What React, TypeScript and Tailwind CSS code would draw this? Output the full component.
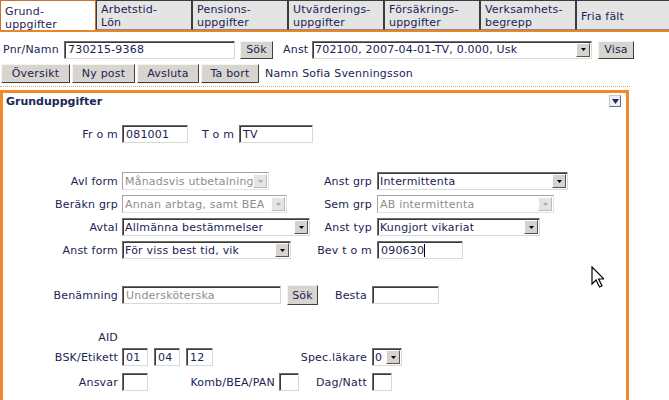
import React from 'react'

const tabs: string[][] = [
  ['Grund-', 'uppgifter'],
  ['Arbetstid-', 'Lön'],
  ['Pensions-', 'uppgifter'],
  ['Utvärderings-', 'uppgifter'],
  ['Försäkrings-', 'uppgifter'],
  ['Verksamhets-', 'begrepp'],
  ['Fria fält'],
]

function Field({ w, value = '', muted, caret }: { w: string; value?: string; muted?: boolean; caret?: boolean }) {
  return (
    <div
      className={`${w} h-[18px] shrink-0 flex items-center pl-[3px] bg-white border border-t-[#6e6e6e] border-l-[#6e6e6e] border-r-[#d8d8d8] border-b-[#d8d8d8] shadow-[inset_1px_1px_0_#3a3a3a] whitespace-nowrap overflow-hidden ${
        muted ? 'text-[#8e8e8e]' : 'text-[#1b2353]'
      }`}
    >
      {value}
      {caret && <span className="w-px h-[13px] bg-black" />}
    </div>
  )
}

function Select({ w, value, disabled }: { w: string; value: string; disabled?: boolean }) {
  return (
    <div
      className={`${w} h-[18px] shrink-0 flex items-center justify-between pl-[2px] bg-white border whitespace-nowrap overflow-hidden ${
        disabled
          ? 'border-t-[#a4a4a4] border-l-[#a4a4a4] border-r-[#e2e2e2] border-b-[#e2e2e2] text-[#8e8e8e]'
          : 'border-t-[#6e6e6e] border-l-[#6e6e6e] border-r-[#d8d8d8] border-b-[#d8d8d8] shadow-[inset_1px_1px_0_#3a3a3a] text-[#1b2353]'
      }`}
    >
      <span className="overflow-hidden">{value}</span>
      <span
        className={`w-[14px] h-[14px] mr-px shrink-0 flex items-center justify-center border border-t-white border-l-white ${
          disabled ? 'bg-[#e4e4e4] border-r-[#bcbcbc] border-b-[#bcbcbc]' : 'bg-[#d6d3ce] border-r-[#555555] border-b-[#555555]'
        }`}
      >
        <svg width="5" height="3" viewBox="0 0 5 3">
          <path d="M0 0h5L2.5 3z" fill={disabled ? '#a8a8a8' : '#000000'} />
        </svg>
      </span>
    </div>
  )
}

function Btn({ w, h = 'h-[18px]', children }: { w: string; h?: string; children: React.ReactNode }) {
  return (
    <div
      className={`${w} ${h} shrink-0 flex items-center justify-center bg-[#d8d5cf] border border-t-[#f4f4f4] border-l-[#f4f4f4] border-r-[#404040] border-b-[#404040] whitespace-nowrap`}
    >
      {children}
    </div>
  )
}

function Label({ children }: { children: React.ReactNode }) {
  return <div className="w-[115px] shrink-0 text-right whitespace-nowrap">{children}</div>
}

export default function App() {
  return (
    <div className="relative w-[669px] h-[400px] overflow-hidden bg-white flex flex-col text-[11px] leading-[13px] tracking-[0.2px] text-[#1b2353] font-['DejaVu_Sans','Verdana',sans-serif]">
      {/* Tabs */}
      <div className="flex shrink-0 overflow-hidden">
        {tabs.map((t, i) => (
          <div
            key={t[0]}
            className={`w-[96px] h-[30px] shrink-0 border pl-[4px] whitespace-nowrap ${
              i === 0
                ? 'bg-white border-[#c27436] border-b-0 pt-[4px]'
                : 'bg-[#e4e4e4] border-[#3c3c3c] border-b-[#8a8a8a] pt-[2px]'
            } ${t.length === 1 ? 'flex items-center pt-0' : ''}`}
          >
            {t.map((line) => (
              <div key={line}>{line}</div>
            ))}
          </div>
        ))}
      </div>
      <div className="h-[2px] shrink-0 bg-[#e9862c]" />

      {/* Search row */}
      <div className="flex items-center h-[17px] mt-[9px] pl-[3px] shrink-0">
        <div className="w-[61px] shrink-0">Pnr/Namn</div>
        <Field w="w-[171px]" value="730215-9368" />
        <div className="ml-[5px]">
          <Btn w="w-[33px]">Sök</Btn>
        </div>
        <div className="w-[29px] ml-[10px] shrink-0">Anst</div>
        <Select w="w-[280px]" value="702100, 2007-04-01-TV, 0.000, Usk" />
        <div className="ml-[6px]">
          <Btn w="w-[36px]">Visa</Btn>
        </div>
      </div>

      {/* Action buttons */}
      <div className="flex items-center gap-[2px] h-[19px] mt-[6px] pl-[1px] shrink-0">
        <Btn w="w-[69px]" h="h-[19px]">Översikt</Btn>
        <Btn w="w-[63px]" h="h-[19px]">Ny post</Btn>
        <Btn w="w-[62px]" h="h-[19px]">Avsluta</Btn>
        <Btn w="w-[58px]" h="h-[19px]">Ta bort</Btn>
        <span className="ml-[4px]">Namn Sofia Svenningsson</span>
      </div>
      <div className="w-[630px] mt-[3px] shrink-0 border-t border-dotted border-[#f0a056]" />

      {/* Panel */}
      <div className="w-[629px] flex-1 mt-[3px] border-[3px] border-b-0 border-[#f08a2c] flex flex-col">
        <div className="flex items-center justify-between h-[16px] pl-[3px] pr-[5px] shrink-0">
          <span className="font-bold tracking-normal text-[#1c2757]">Grunduppgifter</span>
          <span className="w-[12px] h-[12px] flex items-center justify-center bg-[#eef0f6] border border-t-[#c8c8c8] border-l-[#c8c8c8] border-r-[#6c6c6c] border-b-[#6c6c6c]">
            <svg width="7" height="5" viewBox="0 0 7 5">
              <path d="M0 0h7L3.5 5z" fill="#1a2b6e" />
            </svg>
          </span>
        </div>

        {/* Fr o m / T o m */}
        <div className="flex items-center h-[18px] mt-[16px] shrink-0">
          <Label>Fr o m</Label>
          <div className="pl-[4px] flex items-center">
            <Field w="w-[66px]" value="081001" />
            <div className="w-[37px] ml-[14px] shrink-0">T o m</div>
            <Field w="w-[74px]" value="TV" />
          </div>
        </div>

        {/* Upper block */}
        <div className="flex flex-col gap-[5px] mt-[29px] shrink-0">
          <div className="flex items-center h-[18px]">
            <Label>Avl form</Label>
            <div className="w-[194px] pl-[4px] shrink-0">
              <Select w="w-[147px]" value="Månadsvis utbetalning" disabled />
            </div>
            <div className="w-[60px] text-right shrink-0 whitespace-nowrap">Anst grp</div>
            <div className="pl-[5px]">
              <Select w="w-[191px]" value="Intermittenta" />
            </div>
          </div>
          <div className="flex items-center h-[18px]">
            <Label>Beräkn grp</Label>
            <div className="w-[194px] pl-[4px] shrink-0">
              <Select w="w-[165px]" value="Annan arbtag, samt BEA" disabled />
            </div>
            <div className="w-[60px] text-right shrink-0 whitespace-nowrap">Sem grp</div>
            <div className="pl-[5px]">
              <Select w="w-[177px]" value="AB intermittenta" disabled />
            </div>
          </div>
          <div className="flex items-center h-[18px]">
            <Label>Avtal</Label>
            <div className="w-[194px] pl-[4px] shrink-0">
              <Select w="w-[188px]" value="Allmänna bestämmelser" />
            </div>
            <div className="w-[60px] text-right shrink-0 whitespace-nowrap">Anst typ</div>
            <div className="pl-[5px]">
              <Select w="w-[163px]" value="Kungjort vikariat" />
            </div>
          </div>
          <div className="flex items-center h-[18px]">
            <Label>Anst form</Label>
            <div className="w-[194px] pl-[4px] shrink-0">
              <Select w="w-[169px]" value="För viss best tid, vik" />
            </div>
            <div className="w-[60px] text-right shrink-0 whitespace-nowrap">Bev t o m</div>
            <div className="pl-[5px]">
              <Field w="w-[86px]" value="090630" caret />
            </div>
          </div>
        </div>

        {/* Benämning */}
        <div className="flex items-center h-[20px] mt-[26px] shrink-0">
          <Label>Benämning</Label>
          <div className="w-[204px] pl-[4px] flex items-center shrink-0">
            <Field w="w-[159px]" value="Undersköterska" muted />
            <div className="ml-[6px]">
              <Btn w="w-[31px]" h="h-[20px]">Sök</Btn>
            </div>
          </div>
          <div className="w-[45px] text-right shrink-0">Besta</div>
          <div className="pl-[5px]">
            <Field w="w-[67px]" />
          </div>
        </div>

        {/* AID */}
        <div className="flex items-center h-[14px] mt-[25px] shrink-0">
          <Label>AID</Label>
        </div>
        <div className="flex items-center h-[18px] mt-[4px] shrink-0">
          <Label>BSK/Etikett</Label>
          <div className="w-[180px] pl-[4px] flex items-center gap-[6px] shrink-0">
            <Field w="w-[26px]" value="01" />
            <Field w="w-[26px]" value="04" />
            <Field w="w-[27px]" value="12" />
          </div>
          <div className="w-[69px] text-right shrink-0 whitespace-nowrap">Spec.läkare</div>
          <div className="pl-[5px]">
            <Select w="w-[30px]" value="0" />
          </div>
        </div>
        <div className="flex items-center h-[18px] mt-[7px] shrink-0">
          <Label>Ansvar</Label>
          <div className="w-[157px] pl-[4px] flex items-center justify-between shrink-0">
            <Field w="w-[26px]" />
            <span className="whitespace-nowrap">Komb/BEA/PAN</span>
          </div>
          <div className="pl-[4px]">
            <Field w="w-[20px]" />
          </div>
          <div className="w-[68px] text-right shrink-0 whitespace-nowrap">Dag/Natt</div>
          <div className="pl-[5px]">
            <Field w="w-[20px]" />
          </div>
        </div>
      </div>

      {/* Mouse pointer */}
      <svg className="absolute left-[591px] top-[266px]" width="13" height="22" viewBox="0 0 13 22">
        <path d="M1 1v17l4-4 3.5 7 2.5-1.2-3.4-6.8H13z" fill="#ffffff" stroke="#000000" strokeWidth="1.2" strokeLinejoin="miter" />
      </svg>
    </div>
  )
}
